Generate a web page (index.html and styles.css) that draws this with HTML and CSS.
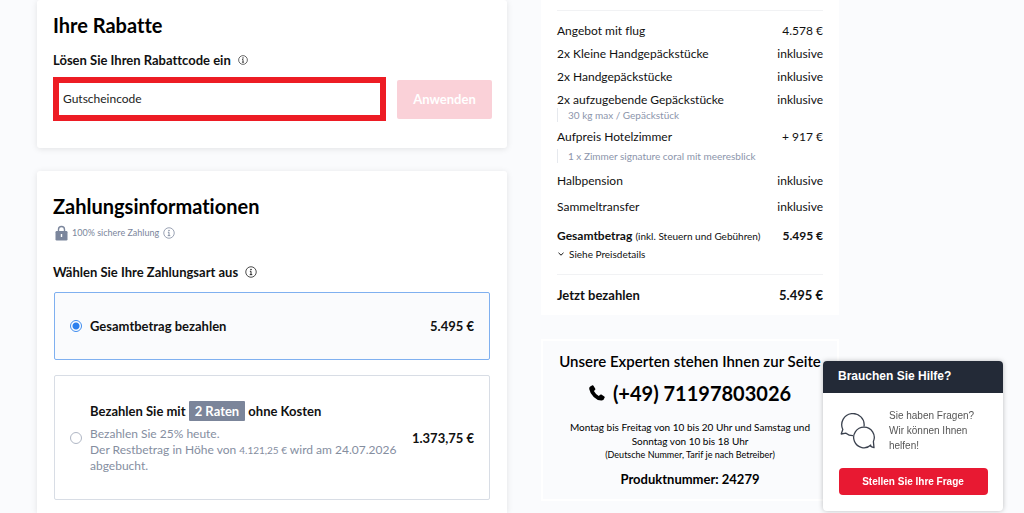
FILE: index.html
```html
<!DOCTYPE html>
<html lang="de">
<head>
    <meta charset="UTF-8">
    <meta name="viewport" content="width=device-width, initial-scale=1.0">
    <title>Zahlungsinformationen</title>
    <link rel="stylesheet" href="styles.css">
</head>
<body>
    <svg class="sprite" width="0" height="0" aria-hidden="true">
        <symbol id="icon-info" viewBox="0 0 16 16">
            <circle cx="8" cy="8" r="7" fill="none" stroke="currentColor" stroke-width="1"/>
            <circle cx="8" cy="4.6" r="1" fill="currentColor"/>
            <path d="M6.5 7H8v4.5M6.3 11.5h3.4" fill="none" stroke="currentColor" stroke-width="1.2"/>
        </symbol>
    </svg>
    <main class="page">
        <div class="column">
            <section class="card discount">
                <h2 class="card-title">Ihre Rabatte</h2>
                <label class="label" for="code">Lösen Sie Ihren Rabattcode ein
                    <svg class="info info-small"><use href="#icon-info"/></svg>
                </label>
                <form class="discount-form">
                    <input class="code" type="text" id="code" placeholder="Gutscheincode">
                    <button class="apply" type="button" disabled>Anwenden</button>
                </form>
            </section>

            <section class="card payment">
                <h2 class="card-title">Zahlungsinformationen</h2>
                <p class="secure">
                    <svg class="lock" viewBox="0 0 13 16">
                        <path d="M3.5 7V4.5a3 3 0 0 1 6 0V7" fill="none" stroke="currentColor" stroke-width="1.4"/>
                        <rect x="0.5" y="6" width="12" height="9.5" rx="1.2" fill="currentColor"/>
                        <path d="M6.5 9v3" stroke="#fff" stroke-width="1.4"/>
                    </svg>
                    <span>100% sichere Zahlung</span>
                    <svg class="info"><use href="#icon-info"/></svg>
                </p>
                <h3 class="label">Wählen Sie Ihre Zahlungsart aus
                    <svg class="info"><use href="#icon-info"/></svg>
                </h3>
                <label class="option selected">
                    <input class="radio" type="radio" name="payment" checked>
                    <span class="option-text"><b>Gesamtbetrag bezahlen</b></span>
                    <b class="amount">5.495 €</b>
                </label>
                <label class="option rates">
                    <input class="radio" type="radio" name="payment">
                    <span class="option-text">
                        <b>Bezahlen Sie mit <span class="badge">2 Raten</span> ohne Kosten</b>
                        <span class="hint">Bezahlen Sie 25% heute.<br>Der Restbetrag in Höhe von <small>4.121,25 €</small> wird am 24.07.2026<br>abgebucht.</span>
                    </span>
                    <b class="amount">1.373,75 €</b>
                </label>
            </section>
        </div>

        <aside class="sidebar">
            <section class="summary">
                <dl class="prices">
                    <div class="row"><dt>Angebot mit flug</dt><dd>4.578 €</dd></div>
                    <div class="row"><dt>2x Kleine Handgepäckstücke</dt><dd>inklusive</dd></div>
                    <div class="row"><dt>2x Handgepäckstücke</dt><dd>inklusive</dd></div>
                    <div class="row"><dt>2x aufzugebende Gepäckstücke<span class="note">30 kg max / Gepäckstück</span></dt><dd>inklusive</dd></div>
                    <div class="row room"><dt>Aufpreis Hotelzimmer<span class="note">1 x Zimmer signature coral mit meeresblick</span></dt><dd>+ 917 €</dd></div>
                    <div class="row extra"><dt>Halbpension</dt><dd>inklusive</dd></div>
                    <div class="row extra"><dt>Sammeltransfer</dt><dd>inklusive</dd></div>
                    <div class="row total"><dt><b>Gesamtbetrag</b> <small>(inkl. Steuern und Gebühren)</small></dt><dd><b>5.495 €</b></dd></div>
                </dl>
                <button class="details" type="button">
                    <svg class="chevron" viewBox="0 0 8 8"><path d="M1.5 2.8 4 5.2l2.5-2.4" fill="none" stroke="currentColor"/></svg>
                    Siehe Preisdetails
                </button>
                <p class="pay-now"><b>Jetzt bezahlen</b><b>5.495 €</b></p>
            </section>

            <section class="experts">
                <h2 class="experts-title">Unsere Experten stehen Ihnen zur Seite</h2>
                <a class="phone" href="tel:+4971197803026">
                    <svg class="phone-icon" viewBox="0 0 16 16"><path d="M1.2 1.4 3.4.3q.7-.3 1.1.4l1.8 3.1q.3.7-.3 1.2L4.9 6q1.6 3.2 4.9 4.9l1.4-1.2q.6-.5 1.2-.1l2.9 1.8q.7.4.4 1.1-.8 2.9-3.1 3Q8.6 15.7 4.7 11.9T.2 4.1Q0 2.2 1.2 1.4Z" fill="currentColor"/></svg>
                    (+49) 71197803026
                </a>
                <p class="hours">Montag bis Freitag von 10 bis 20 Uhr und Samstag und Sonntag von 10 bis 18 Uhr</p>
                <p class="tariff">(Deutsche Nummer, Tarif je nach Betreiber)</p>
                <p class="product">Produktnummer: 24279</p>
            </section>
        </aside>
    </main>

    <aside class="help">
        <h2 class="help-title">Brauchen Sie Hilfe?</h2>
        <div class="help-body">
            <svg class="bubbles" viewBox="0 0 36 36" fill="none" stroke="currentColor" stroke-width="1.3" stroke-linejoin="round">
                <path d="M24 13.5A11.2 11.2 0 1 0 2.8 16.5L1.2 21 6 20.2Q9 22.8 13 22.7"/>
                <path d="M31.2 31.8A10.3 10.3 0 1 1 33.4 28.6L34 34.6Q31.5 34 30 32.8"/>
            </svg>
            <p class="help-text">Sie haben Fragen? Wir können Ihnen helfen!</p>
        </div>
        <button class="ask" type="button">Stellen Sie Ihre Frage</button>
    </aside>
</body>
</html>
```
FILE: styles.css
```css
* {
    box-sizing: border-box;
}
body {
    margin: 0;
    background: #fafbfd;
    color: #111;
    font-family: Lato, "Open Sans", sans-serif;
    font-size: 12px;
    font-variant-ligatures: none;
    line-height: 16px;
}
h2, h3, p, dl, dd {
    margin: 0;
}
b {
    font-weight: 700;
}
.sprite {
    position: absolute;
}
.page {
    display: grid;
    grid-template-columns: minmax(0, 470fr) minmax(0, 298fr);
    gap: 34px;
    min-height: 100vh;
    padding: 0 185px 0 37px;
}
.column {
    display: flex;
    flex-direction: column;
    gap: 23px;
}
.card {
    padding: 0 16px;
    background: white;
    border-radius: 3px;
    box-shadow: 0 1px 6px rgba(0, 0, 0, 0.1);
}
.card-title {
    color: #000;
    font-size: 20px;
    line-height: 24px;
    font-weight: 700;
}
.label {
    display: flex;
    align-items: center;
    gap: 7px;
    font-size: 13px;
    line-height: 16px;
    font-weight: 700;
}
.info {
    width: 12px;
    height: 12px;
}
.info-small {
    width: 10px;
    height: 10px;
}

/* discount code */
.discount {
    padding-top: 13px;
    padding-right: 15px;
    padding-bottom: 27px;
}
.discount .label {
    margin-top: 15px;
    margin-bottom: 9px;
}
.discount-form {
    display: flex;
    align-items: center;
    gap: 11px;
}
.code {
    flex: 1;
    min-width: 0;
    height: 44px;
    padding: 0 4px 2px;
    border: 6px solid #ed1c24;
    background: white;
    font: inherit;
}
.code::placeholder {
    color: #222;
    opacity: 1;
}
.apply {
    width: 95px;
    height: 39px;
    border: none;
    border-radius: 2px;
    background: #fad1d8;
    color: white;
    font: inherit;
    font-size: 13px;
    font-weight: 700;
}

/* payment */
.payment {
    flex: 1;
    padding-top: 23px;
    padding-bottom: 13px;
    border-radius: 3px 3px 0 0;
}
.secure {
    display: flex;
    align-items: center;
    gap: 4px;
    margin-top: 7px;
    padding-left: 2px;
    color: #7b869c;
    font-size: 9px;
}
.lock {
    width: 13px;
    height: 16px;
}
.payment .label {
    margin-top: 23px;
    margin-bottom: 12px;
}
.option {
    display: flex;
    align-items: center;
    gap: 8px;
    min-height: 68px;
    margin: 0 1px 15px;
    padding: 0 15px;
    border: 1px solid #d8dde5;
    border-radius: 2px;
    font-size: 13px;
}
.selected {
    border-color: #7fb0f0;
    background: #fafbfd;
}
.rates {
    min-height: 125px;
    margin-bottom: 0;
}
.radio {
    appearance: none;
    flex: none;
    width: 12px;
    height: 12px;
    margin: 0;
    border: 1px solid #b0b7c5;
    border-radius: 50%;
    background: white;
}
.radio:checked {
    border-color: #3d8bef;
    background: radial-gradient(#2c80ee 3px, white 4px);
}
.option-text {
    flex: 1;
}
.badge {
    display: inline-block;
    padding: 2px 6px;
    border-radius: 1px;
    background: #7b859a;
    color: white;
}
.hint {
    display: block;
    margin-top: 5px;
    color: #858e9f;
    font-size: 12px;
}
.hint small {
    font-size: 10px;
}
.amount {
    font-size: 13px;
    white-space: nowrap;
}

/* price summary */
.summary {
    padding: 10px 16px 12px;
    background: white;
}
.prices {
    padding-top: 12px;
    border-top: 1px solid #f1f2f4;
}
.row {
    display: flex;
    justify-content: space-between;
    margin-bottom: 7px;
}
.note {
    display: block;
    padding-left: 10px;
    border-left: 1px solid #e6e9ee;
    color: #8c95ab;
    font-size: 10px;
    line-height: 14px;
}
.room {
    margin-bottom: 10px;
}
.room .note {
    margin-top: 4px;
}
.extra {
    margin-bottom: 10px;
}
.total {
    margin: 13px 0 2px;
}
.total small {
    font-size: 10px;
}
.details {
    display: flex;
    align-items: center;
    gap: 4px;
    padding: 0;
    border: none;
    background: none;
    color: inherit;
    font: inherit;
    font-size: 10px;
}
.chevron {
    width: 8px;
    height: 8px;
}
.pay-now {
    display: flex;
    justify-content: space-between;
    margin-top: 12px;
    padding-top: 12px;
    border-top: 1px solid #f1f2f4;
    font-size: 13px;
}

/* contact */
.experts {
    margin-top: 24px;
    padding: 11px 8px 12px;
    border: 2px solid white;
    color: #000;
    text-align: center;
}
.experts-title {
    font-size: 15px;
    line-height: 18px;
    font-weight: 600;
    white-space: nowrap;
}
.phone {
    display: flex;
    align-items: center;
    justify-content: center;
    gap: 8px;
    margin-top: 11px;
    color: #000;
    font-size: 20px;
    line-height: 24px;
    font-weight: 700;
    text-decoration: none;
}
.phone-icon {
    width: 16px;
    height: 16px;
}
.hours {
    margin-top: 15px;
    padding: 0 14px;
    font-size: 10px;
    line-height: 14px;
}
.tariff {
    font-size: 9px;
    line-height: 14px;
}
.product {
    margin-top: 9px;
    font-size: 13px;
    font-weight: 700;
}

/* help widget, stays in the corner */
.help {
    position: fixed;
    right: 21px;
    bottom: 2px;
    width: 180px;
    padding-bottom: 16px;
    border-radius: 4px;
    background: white;
    box-shadow: 0 0 5px rgba(0, 0, 0, 0.25);
    font-family: "Liberation Sans", Arial, sans-serif;
}
.help-title {
    padding: 7px 15px 9px;
    border-radius: 4px 4px 0 0;
    background: #232a37;
    color: white;
    font-size: 12px;
    line-height: 16px;
}
.help-body {
    display: flex;
    align-items: center;
    gap: 13px;
    padding: 15px 16px 15px 17px;
}
.bubbles {
    flex: none;
    width: 36px;
    height: 36px;
    color: #3a414e;
}
.help-text {
    color: #555;
    font-size: 10px;
    line-height: 15px;
}
.ask {
    display: block;
    width: 149px;
    height: 27px;
    margin: 0 auto;
    border: none;
    border-radius: 4px;
    background: #e81932;
    color: white;
    font: inherit;
    font-size: 10px;
    font-weight: 700;
}
```
